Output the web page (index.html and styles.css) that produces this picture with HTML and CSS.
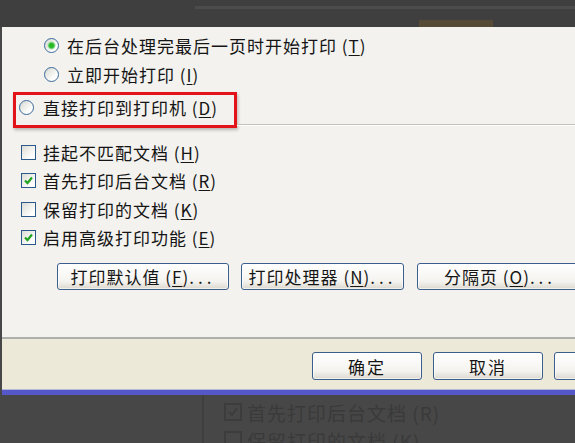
FILE: index.html
```html
<!DOCTYPE html>
<html lang="zh-CN">
<head>
  <meta charset="UTF-8">
  <title>打印机属性</title>
  <link rel="stylesheet" href="styles.css">
</head>
<body>
  <div class="topbar">
    <div class="topbar-strip"></div>
    <div class="topbar-tab"></div>
  </div>
  <div class="dialog">
    <div class="page">
      <div class="radio-group">
        <div class="row"><span class="radio checked"></span><span>在后台处理完最后一页时开始打印 (<u>T</u>)</span></div>
        <div class="row"><span class="radio"></span><span>立即开始打印 (<u>I</u>)</span></div>
      </div>
      <div class="direct-row">
        <div class="highlight"><span class="radio"></span><span>直接打印到打印机 (<u>D</u>)</span></div>
        <div class="sep"></div>
      </div>
      <div class="check-group">
        <div class="crow"><span class="checkbox"></span><span>挂起不匹配文档 (<u>H</u>)</span></div>
        <div class="crow"><span class="checkbox checked"><svg viewBox="0 0 13 13"><path d="M3 6.5 L5.5 9 L10 3.5" /></svg></span><span>首先打印后台文档 (<u>R</u>)</span></div>
        <div class="crow"><span class="checkbox"></span><span>保留打印的文档 (<u>K</u>)</span></div>
        <div class="crow"><span class="checkbox checked"><svg viewBox="0 0 13 13"><path d="M3 6.5 L5.5 9 L10 3.5" /></svg></span><span>启用高级打印功能 (<u>E</u>)</span></div>
      </div>
      <div class="btn-row">
        <button class="btn w1">打印默认值 (<u>F</u>)<span class="dots">...</span></button>
        <button class="btn w2">打印处理器 (<u>N</u>)<span class="dots">...</span></button>
        <button class="btn w3">分隔页 (<u>O</u>)<span class="dots">...</span></button>
      </div>
    </div>
    <div class="footer">
      <button class="btn fbtn">确定</button>
      <button class="btn fbtn">取消</button>
      <button class="btn fbtn"></button>
    </div>
  </div>
  <div class="behind">
    <div class="behind-panel">
      <div class="brow"><span class="bbox"><svg viewBox="0 0 14 14"><path d="M3 7 L6 10 L11 3.5" /></svg></span><span>首先打印后台文档 (R)</span></div>
      <div class="brow"><span class="bbox"></span><span>保留打印的文档 (K)</span></div>
    </div>
  </div>
</body>
</html>
```

FILE: styles.css
```css
body {
  margin: 0;
  width: 575px;
  height: 443px;
  overflow: hidden;
  background-color: #474747;
  font-family: "Noto Sans CJK SC", "Noto Sans", sans-serif;
  color: #151515;
}
u {
  text-underline-offset: 2px;
}
.topbar {
  height: 27px;
  background-color: #3f3f3f;
  overflow: hidden;
}
.topbar-strip {
  margin: 6px 0 0 195px;
  height: 3px;
  background-color: #4c4c4c;
}
.topbar-tab {
  margin: 11px 0 0 419px;
  width: 74px;
  height: 7px;
  background-color: #554a36;
}
.dialog {
  margin-left: 2px;
}
.page {
  height: 310px;
  box-sizing: border-box;
  padding-top: 4px;
  background-color: #f3f2ee;
  font-size: 17px;
  letter-spacing: 1px;
}
.radio-group {
  padding-left: 42px;
}
.row {
  display: flex;
  align-items: center;
  gap: 8px;
  height: 29px;
}
.radio {
  flex: none;
  width: 15px;
  height: 15px;
  box-sizing: border-box;
  border: 1px solid #3a6a9c;
  border-radius: 50%;
  background: linear-gradient(135deg, #d8d8d0, #ffffff 75%);
}
.radio.checked {
  background: radial-gradient(circle, #22b322 0, #33c033 2.5px, #a8e0a8 3.5px, transparent 4.5px),
    linear-gradient(135deg, #d8d8d0, #ffffff 75%);
}
.direct-row {
  display: flex;
  align-items: flex-end;
  margin-top: 3px;
}
.highlight {
  display: flex;
  align-items: center;
  gap: 9px;
  margin-left: 11px;
  width: 224px;
  height: 36px;
  box-sizing: border-box;
  padding: 0 0 5px 3px;
  border: 3px solid #e2141a;
  box-shadow: 1px 2px 3px rgba(0, 0, 0, 0.25);
}
.sep {
  flex: 1;
  height: 0;
  margin-bottom: 2px;
  border-top: 1px solid #c3c3bb;
  border-bottom: 1px solid #ffffff;
}
.check-group {
  margin-top: 10px;
  padding-left: 19px;
}
.crow {
  display: flex;
  align-items: center;
  gap: 7px;
  height: 28.5px;
}
.checkbox {
  flex: none;
  width: 15px;
  height: 15px;
  box-sizing: border-box;
  border: 1px solid #2a5a8c;
  background: linear-gradient(135deg, #dcdcd5, #ffffff 80%);
}
.checkbox svg {
  display: block;
  width: 13px;
  height: 13px;
}
.checkbox path {
  fill: none;
  stroke: #21a421;
  stroke-width: 2.2;
}
.btn-row {
  display: flex;
  margin-top: 11px;
  padding-left: 55px;
}
.btn {
  flex: none;
  height: 27px;
  padding: 0;
  box-sizing: border-box;
  border: 1px solid #3b5f8c;
  border-radius: 3px;
  background: linear-gradient(#ffffff, #f4f3ef 70%, #dcd8cf);
  box-shadow: inset 0 0 0 1px rgba(255, 255, 255, 0.6);
  font-family: inherit;
  font-size: 17px;
  letter-spacing: 1px;
  color: #151515;
  white-space: nowrap;
}
.dots {
  letter-spacing: 4px;
}
.w1 {
  width: 172px;
}
.w2 {
  width: 163px;
  margin-left: 12px;
}
.w3 {
  width: 166px;
  margin-left: 13px;
}
.footer {
  display: flex;
  gap: 11px;
  height: 58px;
  padding-left: 310px;
  padding-top: 13px;
  box-sizing: border-box;
  border-top: 2px solid #adb0ac;
  border-bottom: 5px solid #5657c9;
  background-color: #ece9d8;
  box-shadow: inset 0 -1px 0 #b4b7d6;
  overflow: hidden;
}
.footer .fbtn {
  width: 110px;
  height: 28px;
  letter-spacing: 2px;
}
.behind {
  display: flex;
  height: 48px;
  padding-left: 202px;
}
.behind-panel {
  flex: 1;
  padding: 3px 0 0 20px;
  border-left: 2px solid #3f3f3f;
  color: #3a3a3a;
  font-size: 19px;
  letter-spacing: 1px;
}
.brow {
  display: flex;
  align-items: center;
  gap: 5px;
  height: 28px;
}
.bbox {
  flex: none;
  width: 18px;
  height: 18px;
  box-sizing: border-box;
  border: 2px solid #3c3c3c;
}
.bbox svg {
  display: block;
  width: 14px;
  height: 14px;
}
.bbox path {
  fill: none;
  stroke: #3c3c3c;
  stroke-width: 2;
}
```
